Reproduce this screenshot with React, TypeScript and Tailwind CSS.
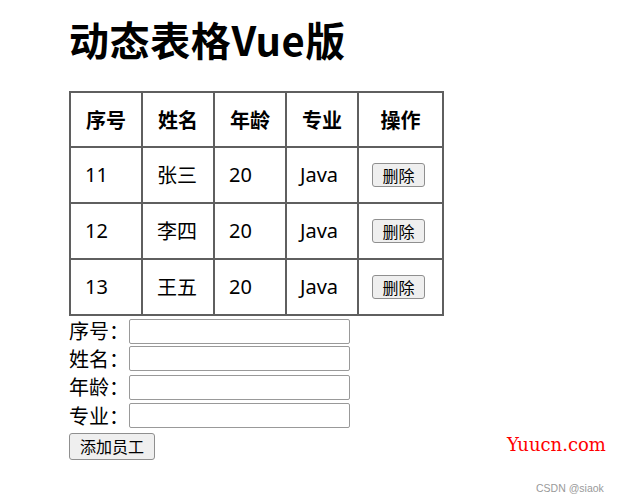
export default function App() {
  const rows = [
    { id: 11, name: "张三", age: 20, major: "Java" },
    { id: 12, name: "李四", age: 20, major: "Java" },
    { id: 13, name: "王五", age: 20, major: "Java" },
  ];
  const fields = ["序号", "姓名", "年龄", "专业"];

  return (
    <div className="relative w-[618px] h-[501px] bg-white text-black font-['Noto_Sans','Noto_Sans_CJK_SC',sans-serif] pl-[69px]">
      <h1 className="pt-[10px] h-[91px] text-[40px] leading-[58px] font-bold tracking-[0.6px] font-['Noto_Sans_CJK_SC',sans-serif]">
        动态表格Vue版
      </h1>
      <table className="border-separate border-spacing-0 border border-[#5f5f5f] text-[20px]">
        <thead>
          <tr>
            {["序号", "姓名", "年龄", "专业"].map((h) => (
              <th
                key={h}
                className="w-[72px] h-[55px] border border-[#5f5f5f] text-center font-bold font-['Noto_Sans_CJK_SC',sans-serif]"
              >
                {h}
              </th>
            ))}
            <th className="w-[85px] h-[55px] border border-[#5f5f5f] text-center font-bold font-['Noto_Sans_CJK_SC',sans-serif]">
              操作
            </th>
          </tr>
        </thead>
        <tbody>
          {rows.map((r) => (
            <tr key={r.id}>
              <td className="h-[56px] border border-[#5f5f5f] pl-[14px]">{r.id}</td>
              <td className="h-[56px] border border-[#5f5f5f] pl-[14px] font-['Noto_Sans_CJK_SC',sans-serif]">
                {r.name}
              </td>
              <td className="h-[56px] border border-[#5f5f5f] pl-[14px]">{r.age}</td>
              <td className="h-[56px] border border-[#5f5f5f] pl-[13px]">{r.major}</td>
              <td className="h-[56px] border border-[#5f5f5f] pl-[13px]">
                <button className="w-[53px] h-[24px] mt-[1px] bg-[#efefef] border border-[#8f8f8f] rounded-[3px] text-[16px] leading-none font-['Noto_Sans_CJK_SC',sans-serif]">
                  删除
                </button>
              </td>
            </tr>
          ))}
        </tbody>
      </table>
      <div className="flex flex-col text-[20px] font-['Noto_Sans_CJK_SC',sans-serif]">
        {fields.map((f, i) => (
          <div key={f} className={`flex items-center h-[28.5px] ${i === 0 ? "pt-[2px]" : ""}`}>
            <span className="w-[60px] leading-none">{f}：</span>
            <input className="w-[221px] h-[25px] border border-[#999] rounded-[2px] outline-none" />
          </div>
        ))}
        <div>
          <button className="w-[86px] h-[27px] bg-[#efefef] border border-[#8f8f8f] rounded-[3px] text-[16px] leading-none">
            添加员工
          </button>
        </div>
      </div>
      <div className="absolute left-[507px] top-[435px] text-[18px] leading-[20px] text-[#ff0000] font-['DejaVu_Serif',serif]">
        Yuucn.com
      </div>
      <div className="absolute left-[536px] top-[481px] text-[10.5px] leading-[14px] text-[#9a9a9a] font-['Liberation_Sans',sans-serif]">
        CSDN @siaok
      </div>
    </div>
  );
}
